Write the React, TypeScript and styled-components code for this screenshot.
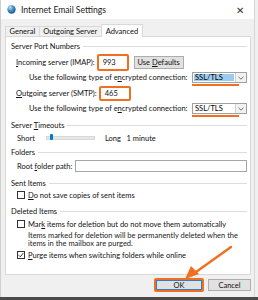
import styled, { createGlobalStyle } from 'styled-components'

const GlobalStyle = createGlobalStyle`
	html, body {
		margin: 0;
		padding: 0;
		background: #f0f0f0;
	}
	body {
		font-family: Lato, "Liberation Sans", sans-serif;
		font-size: 7.5px;
		color: #111;
	}
`

const orange = '#f0701f'

const Screen = styled.div`
	position: relative;
	width: 258px;
	height: 300px;
	overflow: hidden;
	background: #f0f0f0;
	display: flex;
	flex-direction: column;
`

const Window = styled.div`
	width: 253px;
	flex: 1;
	display: flex;
	flex-direction: column;
	border-left: 1px solid #cfcfcf;
	border-right: 1px solid #d6d6d6;
`

const TitleBar = styled.div`
	height: 19px;
	background: #fff;
	display: flex;
	align-items: center;
	padding-left: 6px;
	gap: 5px;
	font-size: 8.6px;
	color: #1a1a1a;
`

const TitleText = styled.span`
	flex: 1;
`

const CloseX = styled.span`
	width: 20px;
	display: flex;
	justify-content: center;
	font-size: 10px;
	font-weight: 300;
	color: #333;
	padding-right: 4px;
`

const Body = styled.div`
	flex: 1;
	display: flex;
	flex-direction: column;
	padding: 5px 2px 0 4px;
`

const Tabs = styled.div`
	display: flex;
	align-items: flex-end;
	height: 13px;
	padding-left: 1px;
	position: relative;
	z-index: 1;
	margin-bottom: -1px;
`

const Tab = styled.div<{ $active?: boolean }>`
	height: ${p => (p.$active ? 13 : 11)}px;
	box-sizing: border-box;
	display: flex;
	align-items: center;
	padding: 0 ${p => (p.$active ? 4 : 3.5)}px;
	border: 1px solid #d9d9d9;
	border-bottom: ${p => (p.$active ? 'none' : '1px solid #d9d9d9')};
	margin-left: -1px;
	background: ${p => (p.$active ? '#fff' : '#f0f0f0')};
	white-space: nowrap;
`

const Panel = styled.div`
	width: 246px;
	height: 239px;
	box-sizing: border-box;
	background: #fff;
	border: 1px solid #d9d9d9;
	padding: 4px 3px 0 5px;
	display: flex;
	flex-direction: column;
`

const Heading = styled.div<{ $mt?: number }>`
	display: flex;
	align-items: center;
	gap: 3px;
	height: 10px;
	margin-top: ${p => p.$mt ?? 0}px;
	white-space: nowrap;
	&::after {
		content: '';
		flex: 1;
		height: 1px;
		background: #dcdcdc;
	}
`

const Row = styled.div<{ $h: number; $mt?: number; $indent?: number }>`
	display: flex;
	align-items: center;
	height: ${p => p.$h}px;
	margin-top: ${p => p.$mt ?? 0}px;
	padding-left: ${p => p.$indent ?? 5}px;
	white-space: nowrap;
`

const Key = styled.span`
	text-decoration: underline;
	text-underline-offset: 1px;
`

const PortBox = styled.div<{ $h: number }>`
	width: 32px;
	height: ${p => p.$h}px;
	box-sizing: border-box;
	border: 2px solid ${orange};
	border-radius: 2px;
	background: #fff;
	display: flex;
	align-items: center;
	padding-left: 4px;
	margin-left: 2px;
`

const GrayButton = styled.div`
	width: 50px;
	height: 13px;
	box-sizing: border-box;
	border: 1px solid #adadad;
	background: #e1e1e1;
	display: flex;
	align-items: center;
	justify-content: center;
	margin-left: 5px;
	white-space: nowrap;
`

const SelectWrap = styled.div`
	margin-left: auto;
	position: relative;
	&::after {
		content: '';
		position: absolute;
		left: 0;
		bottom: -3px;
		width: 47px;
		height: 2px;
		background: ${orange};
	}
`

const Select = styled.div`
	width: 55px;
	height: 11px;
	box-sizing: border-box;
	border: 1px solid #a0a0a0;
	background: #fff;
	display: flex;
`

const SelectValue = styled.div<{ $selected?: boolean }>`
	flex: 1;
	display: flex;
	align-items: center;
	padding-left: 1px;
	margin: 1px;
	background: ${p => (p.$selected ? '#9ccbf0' : '#fff')};
	color: #000;
`

const SelectArrow = styled.div`
	width: 10px;
	border-left: 1px solid #d0d0d0;
	background: #f2f2f2;
	display: flex;
	align-items: center;
	justify-content: center;
`

const Track = styled.div`
	position: relative;
	width: 47px;
	height: 2px;
	background: #e6e6e6;
	border: 1px solid #d8d8d8;
	margin: 0 10px 0 11px;
`

const Thumb = styled.div`
	position: absolute;
	left: 3px;
	top: -3px;
	width: 3px;
	height: 6px;
	background: #0078d7;
	border-radius: 1px;
`

const TextInput = styled.div`
	flex: 1;
	height: 12px;
	box-sizing: border-box;
	border: 1px solid #a6a6a6;
	background: #fff;
	margin-left: 3px;
`

const Box = styled.div`
	width: 8px;
	height: 8px;
	box-sizing: border-box;
	border: 1px solid #333;
	background: #fff;
	margin-right: 3px;
	display: flex;
	align-items: center;
	justify-content: center;
`

const Note = styled.div`
	margin-top: 3px;
	padding-left: 17px;
	line-height: 8px;
	color: #1a1a1a;
	white-space: nowrap;
`

const Footer = styled.div`
	display: flex;
	justify-content: flex-end;
	align-items: center;
	gap: 4px;
	height: 20px;
	padding-right: 1px;
`

const OkFrame = styled.div`
	width: 50px;
	height: 14px;
	box-sizing: border-box;
	border: 2px solid ${orange};
	border-radius: 2px;
	display: flex;
`

const OkButton = styled.div`
	flex: 1;
	border: 1px solid #2a7fd0;
	background: #e1e1e1;
	display: flex;
	align-items: center;
	justify-content: center;
`

const CancelButton = styled(GrayButton)`
	width: 43px;
	height: 12px;
	margin-left: 0;
`

const BottomStrip = styled.div`
	height: 3px;
	background: #4b4b4b;
`

const Arrow = styled.svg`
	position: absolute;
	left: 0;
	top: 0;
	pointer-events: none;
`

function Globe() {
	return (
		<svg width='9' height='9' viewBox='0 0 10 10'>
			<defs>
				<radialGradient id='g' cx='0.35' cy='0.3' r='0.75'>
					<stop offset='0' stopColor='#e8f4ff' />
					<stop offset='0.45' stopColor='#3f8fd8' />
					<stop offset='1' stopColor='#1b4f8f' />
				</radialGradient>
			</defs>
			<circle cx='5' cy='5' r='4.6' fill='url(#g)' />
			<path d='M2.5 3.2c1 .2 1.3 1 2.2 1.2.6.2.5 1.1 1.2 1.4.6.3.2 1.5-.5 1.8' stroke='#6bb36b' strokeWidth='0.9' fill='none' />
		</svg>
	)
}

function Chevron() {
	return (
		<svg width='6' height='4' viewBox='0 0 6 4'>
			<path d='M0.5 0.8L3 3.2L5.5 0.8' stroke='#555' strokeWidth='0.8' fill='none' />
		</svg>
	)
}

function Check() {
	return (
		<svg width='6' height='6' viewBox='0 0 6 6'>
			<path d='M0.7 3.2L2.3 4.8L5.3 1' stroke='#222' strokeWidth='0.9' fill='none' />
		</svg>
	)
}

function EncryptionRow({ mt, selected }: { mt?: number; selected?: boolean }) {
	return (
		<Row $h={13} $mt={mt} $indent={18}>
			<span>
				Use the following type of e<Key>n</Key>crypted connection:
			</span>
			<SelectWrap>
				<Select>
					<SelectValue $selected={selected}>SSL/TLS</SelectValue>
					<SelectArrow>
						<Chevron />
					</SelectArrow>
				</Select>
			</SelectWrap>
		</Row>
	)
}

export default function App() {
	return (
		<Screen>
			<GlobalStyle />
			<Window>
				<TitleBar>
					<Globe />
					<TitleText>Internet Email Settings</TitleText>
					<CloseX>✕</CloseX>
				</TitleBar>
				<Body>
					<Tabs>
						<Tab>General</Tab>
						<Tab>Outgoing Server</Tab>
						<Tab $active>Advanced</Tab>
					</Tabs>
					<Panel>
						<Heading>Server Port Numbers</Heading>
						<Row $h={18} $mt={2}>
							<span>
								<Key>I</Key>ncoming server (IMAP):
							</span>
							<PortBox $h={17}>993</PortBox>
							<GrayButton>
								<span>
									Use <Key>D</Key>efaults
								</span>
							</GrayButton>
						</Row>
						<EncryptionRow selected />
						<Row $h={17} $mt={1}>
							<span>
								<Key>O</Key>utgoing server (SMTP):
							</span>
							<PortBox $h={15}>465</PortBox>
						</Row>
						<EncryptionRow />
						<Heading $mt={5}>
							<span>
								Server <Key>T</Key>imeouts
							</span>
						</Heading>
						<Row $h={12} $mt={2} $indent={6}>
							<span>Short</span>
							<Track>
								<Thumb />
							</Track>
							<span>Long&nbsp;&nbsp;&nbsp;1 minute</span>
						</Row>
						<Heading $mt={3}>Folders</Heading>
						<Row $h={14} $mt={2} $indent={6}>
							<span>
								Root <Key>f</Key>older path:
							</span>
							<TextInput />
						</Row>
						<Heading $mt={5}>Sent Items</Heading>
						<Row $h={10} $mt={2} $indent={6}>
							<Box />
							<span>
								<Key>D</Key>o not save copies of sent items
							</span>
						</Row>
						<Heading $mt={6}>Deleted Items</Heading>
						<Row $h={10} $mt={3} $indent={6}>
							<Box />
							<span>
								Mar<Key>k</Key> items for deletion but do not move them automatically
							</span>
						</Row>
						<Note>
							Items marked for deletion will be permanently deleted when the
							<br />
							items in the mailbox are purged.
						</Note>
						<Row $h={10} $mt={2} $indent={6}>
							<Box>
								<Check />
							</Box>
							<span>
								<Key>P</Key>urge items when switching folders while online
							</span>
						</Row>
					</Panel>
					<Footer>
						<OkFrame>
							<OkButton>OK</OkButton>
						</OkFrame>
						<CancelButton>Cancel</CancelButton>
					</Footer>
				</Body>
			</Window>
			<BottomStrip />
			<Arrow width='258' height='300' viewBox='0 0 258 300'>
				<line x1='231' y1='247' x2='196' y2='272' stroke={orange} strokeWidth='2.4' strokeLinecap='round' />
				<polygon points='185,279 191,266 199,274' fill={orange} />
			</Arrow>
		</Screen>
	)
}
